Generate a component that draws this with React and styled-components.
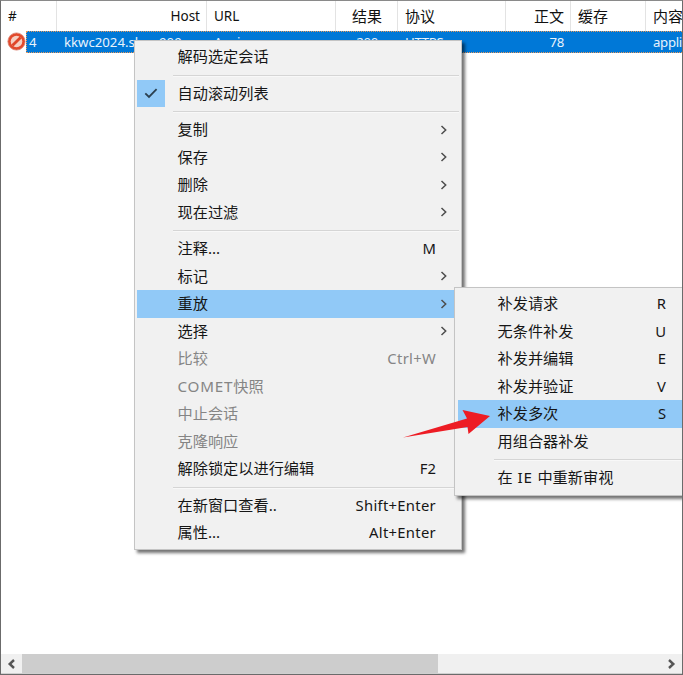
import React from 'react';
import styled, { createGlobalStyle, css } from 'styled-components';

const GlobalStyle = createGlobalStyle`
  * {
    box-sizing: border-box;
  }

  body {
    margin: 0;
    overflow: hidden;
    background: white;
    font-family: 'Noto Sans', 'Noto Sans CJK SC', sans-serif;
  }
`;

const Window = styled.div`
  position: relative;
  display: flex;
  flex-direction: column;
  width: 683px;
  height: 675px;
  overflow: hidden;
  background: white;
  border: 1px solid #6b6b6b;
  border-top-color: #8a8a8a;
`;

const HeaderRow = styled.div`
  display: flex;
  height: 30px;
  flex: none;
`;

const HeaderCell = styled.div`
  flex: none;
  width: ${({ $width }) => $width}px;
  padding: 0 ${({ $padRight }) => $padRight || 6}px 0 7px;
  border-right: 1px solid #e3e3e3;
  font-size: ${({ $cjk }) => ($cjk ? '15px' : '13.5px')};
  line-height: 31px;
  white-space: nowrap;
  text-align: ${({ $align }) => $align || 'left'};
  color: #111;
`;

const SessionRow = styled.div`
  display: flex;
  height: 22px;
  flex: none;
`;

const IconSlot = styled.div`
  width: 25px;
  flex: none;
  padding: 1px 0 0 6px;

  svg {
    display: block;
  }
`;

const SelectedCells = styled.div`
  display: flex;
  flex: 1;
  min-width: 0;
  overflow: hidden;
  background: #0078d7;
  border: 1px dotted #e8995a;
  border-right: none;
`;

const Cell = styled.div`
  flex: none;
  width: ${({ $width }) => $width}px;
  padding: 0 ${({ $padRight }) => $padRight || 8}px 0 ${({ $padLeft }) => $padLeft || 6}px;
  font-size: 13.2px;
  line-height: 21px;
  letter-spacing: ${({ $wide }) => ($wide ? '0' : '-0.3px')};
  white-space: nowrap;
  text-align: ${({ $align }) => $align || 'left'};
  color: #e8f3fc;
`;

const Blank = styled.div`
  flex: 1;
`;

const ScrollBar = styled.div`
  display: flex;
  height: 20px;
  flex: none;
  background: #f0f0f0;
  border-bottom: 1px solid #d0d0d0;
`;

const ScrollButton = styled.div`
  display: flex;
  width: 21px;
  align-items: center;
  justify-content: center;
`;

const Track = styled.div`
  flex: 1;
`;

const Thumb = styled.div`
  width: 416px;
  height: 19px;
  background: #cdcdcd;
`;

const Menu = styled.div`
  position: absolute;
  padding: 2px;
  background: #f1f1f1;
  border: 1px solid #c4c4c4;
  box-shadow: 3px 3px 3px rgba(0, 0, 0, 0.55);
`;

const SessionMenu = styled(Menu)`
  left: 133px;
  top: 39px;
  width: 328px;
`;

const ReplayMenu = styled(Menu)`
  left: 453px;
  top: 286px;
  width: 240px;
  padding: 2px 2px 3px 3px;
`;

const Item = styled.div`
  display: flex;
  align-items: center;
  height: 27.5px;
  font-size: 15.2px;
  line-height: 27px;
  white-space: nowrap;
  color: ${({ $disabled }) => ($disabled ? '#858585' : '#161616')};

  ${({ $active }) => $active && css`
    background: #91c9f7;
  `}
`;

const Gutter = styled.div`
  display: flex;
  width: ${({ $width }) => $width}px;
  height: 100%;
  flex: none;
`;

const CheckBox = styled.div`
  display: flex;
  width: 28px;
  height: 27.5px;
  align-items: center;
  justify-content: center;
  background: #91c9f7;
`;

const Label = styled.div`
  flex: 1;
`;

const Latin = styled.span`
  letter-spacing: 0.8px;
`;

const Shortcut = styled.div`
  font-size: 14.8px;
  letter-spacing: ${({ $long }) => ($long ? '0.3px' : '0')};
`;

const ArrowSlot = styled.div`
  display: flex;
  width: ${({ $width }) => $width}px;
  flex: none;
  justify-content: flex-end;
  padding-right: 11px;
`;

const Separator = styled.div`
  height: 9px;
  padding: 4px 0 0 36px;

  &::before {
    content: '';
    display: block;
    height: 1px;
    background: #d5d5d5;
    box-shadow: 0 1px 0 #f8f8f8;
  }
`;

const Pointer = styled.svg`
  position: absolute;
  left: 401px;
  top: 407px;
`;

const columns = [
  { title: '#', width: 56, value: '4' },
  { title: 'Host', width: 150, align: 'right', value: 'kkwc2024.shop909', wide: true },
  { title: 'URL', width: 129, value: 'Aapi' },
  { title: '结果', width: 62, align: 'right', cjk: true, padRight: 15, value: '200', valuePad: 21 },
  { title: '协议', width: 108, cjk: true, value: 'HTTPS' },
  { title: '正文', width: 65, align: 'right', cjk: true, value: '78' },
  { title: '缓存', width: 75, cjk: true, value: '' },
  { title: '内容类型', width: 120, cjk: true, value: 'application/json' },
];

const sessionItems = [
  { label: '解码选定会话' },
  null,
  { label: '自动滚动列表', checked: true },
  null,
  { label: '复制', sub: true },
  { label: '保存', sub: true },
  { label: '删除', sub: true },
  { label: '现在过滤', sub: true },
  null,
  { label: '注释...', keys: 'M' },
  { label: '标记', sub: true },
  { label: '重放', sub: true, active: true },
  { label: '选择', sub: true },
  { label: '比较', keys: 'Ctrl+W', disabled: true },
  { label: <><Latin>COMET</Latin>快照</>, disabled: true },
  { label: '中止会话', disabled: true },
  { label: '克隆响应', disabled: true },
  { label: '解除锁定以进行编辑', keys: 'F2' },
  null,
  { label: '在新窗口查看..', keys: 'Shift+Enter' },
  { label: '属性...', keys: 'Alt+Enter' },
];

const replayItems = [
  { label: '补发请求', keys: 'R' },
  { label: '无条件补发', keys: 'U' },
  { label: '补发并编辑', keys: 'E' },
  { label: '补发并验证', keys: 'V' },
  { label: '补发多次', keys: 'S', active: true },
  { label: '用组合器补发' },
  null,
  { label: <>在<Latin> IE </Latin>中重新审视</> },
];

const BlockedIcon = () => (
  <svg width="19" height="19" viewBox="0 0 19 19">
    <circle cx="9.5" cy="9.5" r="8.6" fill="#e2492b" stroke="#d98070" strokeWidth="0.8" />
    <circle cx="9.5" cy="9.5" r="5.8" fill="#f5cfc2" />
    <path d="M5.4 13.6 L13.6 5.4" stroke="#df4527" strokeWidth="2.8" />
  </svg>
);

const Chevron = () => (
  <svg width="8" height="10" viewBox="0 0 8 10">
    <path d="M1.5 1 L5.7 5 L1.5 9" fill="none" stroke="#4d4d4d" strokeWidth="1.5" />
  </svg>
);

const CheckMark = () => (
  <svg width="14" height="11" viewBox="0 0 14 11">
    <path d="M1.3 5.3 L5 9 L12.6 1.2" fill="none" stroke="#2b4050" strokeWidth="1.8" />
  </svg>
);

const ScrollArrow = ({ right }) => (
  <svg width="9" height="10" viewBox="0 0 9 10">
    <path
      d={right ? 'M2 1 L6.3 5 L2 9' : 'M7 1 L2.7 5 L7 9'}
      fill="none"
      stroke="#555"
      strokeWidth="2.4"
    />
  </svg>
);

const MenuItems = ({ items, gutter, arrowWidth }) => (
  items.map((item, index) => (
    item ? (
      <Item key={index} $active={item.active} $disabled={item.disabled}>
        <Gutter $width={gutter}>
          {item.checked && <CheckBox><CheckMark /></CheckBox>}
        </Gutter>
        <Label>{item.label}</Label>
        {item.keys && <Shortcut $long={item.keys.length > 2}>{item.keys}</Shortcut>}
        <ArrowSlot $width={arrowWidth}>{item.sub && <Chevron />}</ArrowSlot>
      </Item>
    ) : <Separator key={index} />
  ))
);

const App = () => (
  <>
    <GlobalStyle />
    <Window>
      <HeaderRow>
        {columns.map((col) => (
          <HeaderCell
            key={col.title}
            $width={col.width}
            $align={col.align}
            $cjk={col.cjk}
            $padRight={col.padRight}
          >
            {col.title}
          </HeaderCell>
        ))}
      </HeaderRow>
      <SessionRow>
        <IconSlot><BlockedIcon /></IconSlot>
        <SelectedCells>
          {columns.map((col, index) => (
            <Cell
              key={col.title}
              $width={index === 0 ? 31 : col.width}
              $align={index === 1 ? 'left' : col.align}
              $padLeft={index === 0 ? 2 : 6}
              $padRight={col.valuePad}
              $wide={col.wide}
            >
              {col.value}
            </Cell>
          ))}
        </SelectedCells>
      </SessionRow>
      <Blank />
      <ScrollBar>
        <ScrollButton><ScrollArrow /></ScrollButton>
        <Track><Thumb /></Track>
        <ScrollButton><ScrollArrow right /></ScrollButton>
      </ScrollBar>

      <SessionMenu>
        <MenuItems items={sessionItems} gutter={40.5} arrowWidth={23} />
      </SessionMenu>
      <ReplayMenu>
        <MenuItems items={replayItems} gutter={39.5} arrowWidth={25} />
      </ReplayMenu>
      <Pointer width="90" height="32" viewBox="402 408 90 32">
        <path d="M403 437.5 L467 418.5 L462.5 410 L490 416 L468.5 434 L467.5 427 Z" fill="#ed1c24" />
      </Pointer>
    </Window>
  </>
);

export default App;
